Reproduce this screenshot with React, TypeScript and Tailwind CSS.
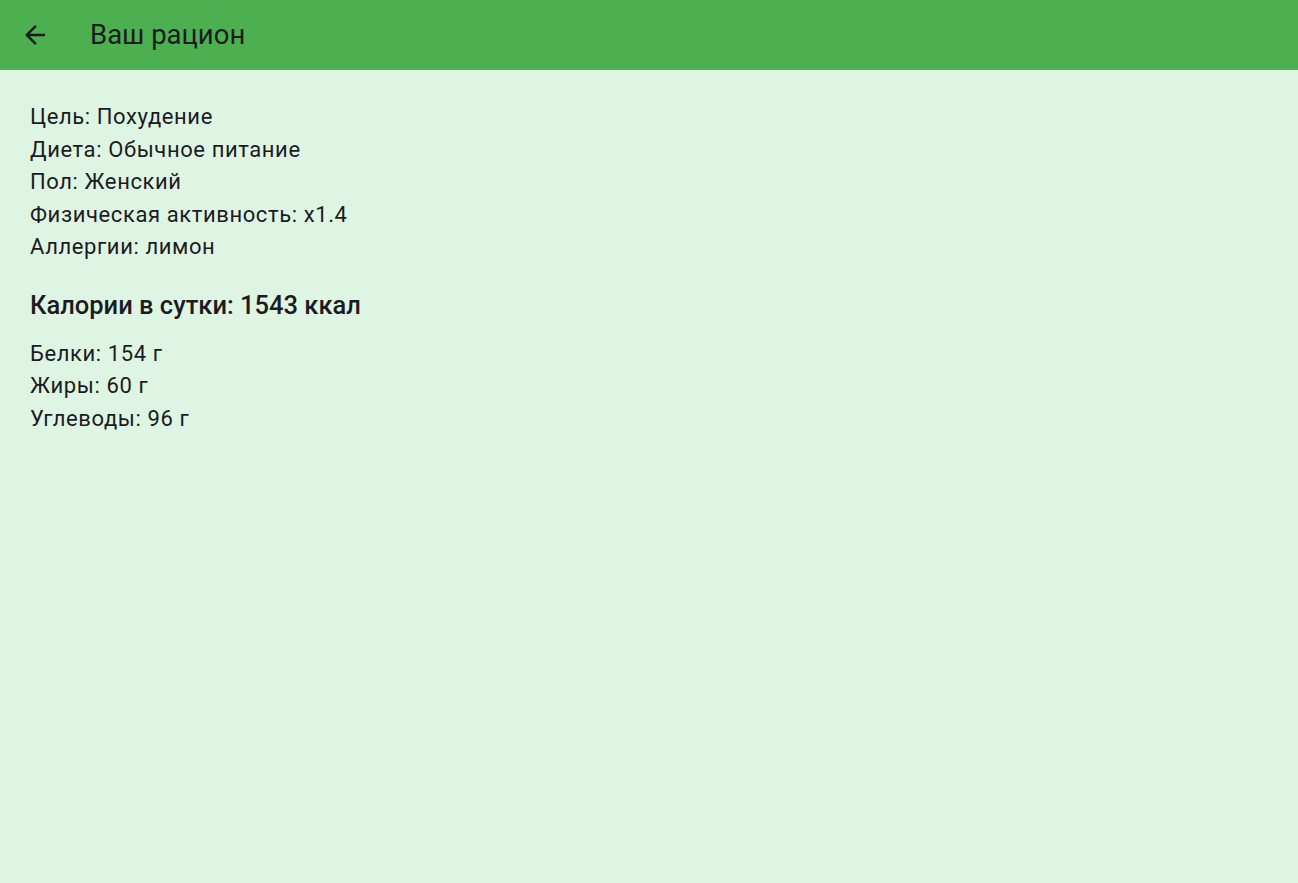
export default function App() {
  const profile = [
    "Цель: Похудение",
    "Диета: Обычное питание",
    "Пол: Женский",
    "Физическая активность: x1.4",
    "Аллергии: лимон",
  ];
  const macros = ["Белки: 154 г", "Жиры: 60 г", "Углеводы: 96 г"];

  return (
    <div className="min-h-[883px] bg-[#dff5e4] font-['Roboto',sans-serif] text-[#1c1b1f]">
      <header className="flex h-[70px] items-center bg-[#4caf50]">
        <button className="ml-[20px] flex h-[30px] w-[30px] items-center justify-center">
          <svg width="30" height="30" viewBox="0 0 24 24" fill="#1c1b1f">
            <path d="M20 11H7.83l5.59-5.59L12 4l-8 8 8 8 1.41-1.41L7.83 13H20v-2z" />
          </svg>
        </button>
        <h1 className="ml-[40px] text-[27.5px] leading-none">Ваш рацион</h1>
      </header>

      <main className="px-[30px] pt-[31px]">
        <div className="flex flex-col">
          {profile.map((line) => (
            <p key={line} className="text-[22px] leading-[32.5px] tracking-[0.6px]">
              {line}
            </p>
          ))}
        </div>
        <h2 className="mt-[25px] text-[25.5px] font-medium leading-[32px]">
          Калории в сутки: 1543 ккал
        </h2>
        <div className="mt-[17px] flex flex-col">
          {macros.map((line) => (
            <p key={line} className="text-[22px] leading-[32.5px] tracking-[0.6px]">
              {line}
            </p>
          ))}
        </div>
      </main>
    </div>
  );
}
